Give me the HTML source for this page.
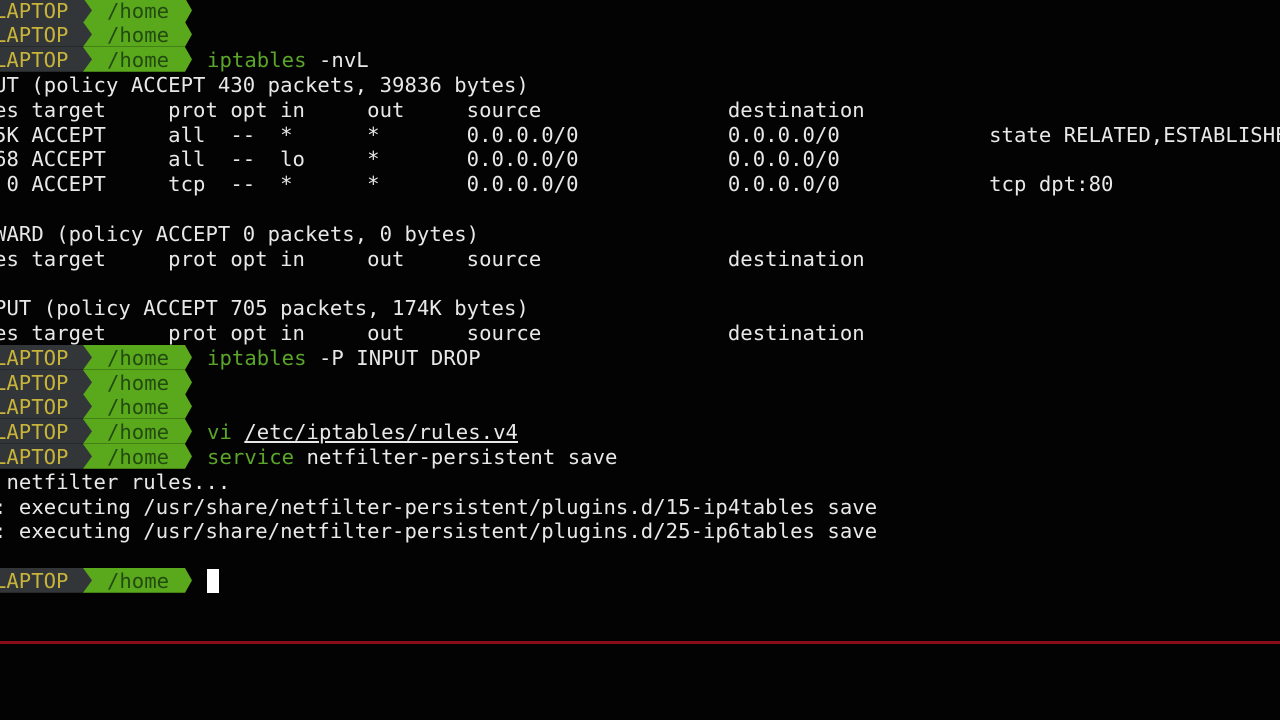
<!DOCTYPE html>
<html><head><meta charset="utf-8"><style>
html,body{margin:0;padding:0;background:#030303;width:1280px;height:720px;overflow:hidden;position:relative}
.l{position:absolute;left:-6px;height:24.8px;line-height:24.8px;font-family:"DejaVu Sans Mono","Liberation Mono",monospace;font-size:20.6px;letter-spacing:0.04px;color:#e8e8e8;white-space:pre;margin:0;padding-top:1px}
.p{position:absolute;left:0;width:1280px;height:24.8px}
.p svg{position:absolute;left:0;top:0}
.u{position:absolute;left:-6px;top:1px;line-height:24.8px;font-family:"DejaVu Sans Mono",monospace;font-size:20.6px;white-space:pre;color:#c8b43a}
.h{position:absolute;left:107px;top:1px;line-height:24.8px;font-family:"DejaVu Sans Mono",monospace;font-size:20.6px;white-space:pre;color:#234a10}
.c{position:absolute;left:207px;top:1px;line-height:24.8px;font-family:"DejaVu Sans Mono",monospace;font-size:20.6px;letter-spacing:0.04px;white-space:pre;color:#e8e8e8}
.g{color:#5aa52a}
.cur{display:inline-block;width:12px;height:24px;background:#fff;vertical-align:top}
</style></head><body>
<div class="p" style="top:-2.4px"><svg width="200" height="25"><polygon points="83,0 185,0 192,12.4 185,24.8 83,24.8" fill="#5aa91c"/><polygon points="0,0 83,0 92,12.4 83,24.8 0,24.8" fill="#333638"/></svg><div class="u">LAPTOP</div><div class="h">/home</div></div>
<div class="p" style="top:22.4px"><svg width="200" height="25"><polygon points="83,0 185,0 192,12.4 185,24.8 83,24.8" fill="#5aa91c"/><polygon points="0,0 83,0 92,12.4 83,24.8 0,24.8" fill="#333638"/></svg><div class="u">LAPTOP</div><div class="h">/home</div></div>
<div class="p" style="top:47.2px"><svg width="200" height="25"><polygon points="83,0 185,0 192,12.4 185,24.8 83,24.8" fill="#5aa91c"/><polygon points="0,0 83,0 92,12.4 83,24.8 0,24.8" fill="#333638"/></svg><div class="u">LAPTOP</div><div class="h">/home</div><div class="c"><span class="g">iptables</span> -nvL</div></div>
<div class="l" style="top:72px">UT (policy ACCEPT 430 packets, 39836 bytes)</div>
<div class="l" style="top:96.8px">es target     prot opt in     out     source               destination</div>
<div class="l" style="top:121.6px">5K ACCEPT     all  --  *      *       0.0.0.0/0            0.0.0.0/0            state RELATED,ESTABLISHED</div>
<div class="l" style="top:146.4px">68 ACCEPT     all  --  lo     *       0.0.0.0/0            0.0.0.0/0</div>
<div class="l" style="top:171.2px"> 0 ACCEPT     tcp  --  *      *       0.0.0.0/0            0.0.0.0/0            tcp dpt:80</div>
<div class="l" style="top:220.8px">WARD (policy ACCEPT 0 packets, 0 bytes)</div>
<div class="l" style="top:245.6px">es target     prot opt in     out     source               destination</div>
<div class="l" style="top:295.2px">PUT (policy ACCEPT 705 packets, 174K bytes)</div>
<div class="l" style="top:320px">es target     prot opt in     out     source               destination</div>
<div class="p" style="top:344.8px"><svg width="200" height="25"><polygon points="83,0 185,0 192,12.4 185,24.8 83,24.8" fill="#5aa91c"/><polygon points="0,0 83,0 92,12.4 83,24.8 0,24.8" fill="#333638"/></svg><div class="u">LAPTOP</div><div class="h">/home</div><div class="c"><span class="g">iptables</span> -P INPUT DROP</div></div>
<div class="p" style="top:369.6px"><svg width="200" height="25"><polygon points="83,0 185,0 192,12.4 185,24.8 83,24.8" fill="#5aa91c"/><polygon points="0,0 83,0 92,12.4 83,24.8 0,24.8" fill="#333638"/></svg><div class="u">LAPTOP</div><div class="h">/home</div></div>
<div class="p" style="top:394.4px"><svg width="200" height="25"><polygon points="83,0 185,0 192,12.4 185,24.8 83,24.8" fill="#5aa91c"/><polygon points="0,0 83,0 92,12.4 83,24.8 0,24.8" fill="#333638"/></svg><div class="u">LAPTOP</div><div class="h">/home</div></div>
<div class="p" style="top:419.2px"><svg width="200" height="25"><polygon points="83,0 185,0 192,12.4 185,24.8 83,24.8" fill="#5aa91c"/><polygon points="0,0 83,0 92,12.4 83,24.8 0,24.8" fill="#333638"/></svg><div class="u">LAPTOP</div><div class="h">/home</div><div class="c"><span class="g">vi</span> <u>/etc/iptables/rules.v4</u></div></div>
<div class="p" style="top:444px"><svg width="200" height="25"><polygon points="83,0 185,0 192,12.4 185,24.8 83,24.8" fill="#5aa91c"/><polygon points="0,0 83,0 92,12.4 83,24.8 0,24.8" fill="#333638"/></svg><div class="u">LAPTOP</div><div class="h">/home</div><div class="c"><span class="g">service</span> netfilter-persistent save</div></div>
<div class="l" style="top:468.8px"> netfilter rules...</div>
<div class="l" style="top:493.6px">: executing /usr/share/netfilter-persistent/plugins.d/15-ip4tables save</div>
<div class="l" style="top:518.4px">: executing /usr/share/netfilter-persistent/plugins.d/25-ip6tables save</div>
<div class="p" style="top:568px"><svg width="200" height="25"><polygon points="83,0 185,0 192,12.4 185,24.8 83,24.8" fill="#5aa91c"/><polygon points="0,0 83,0 92,12.4 83,24.8 0,24.8" fill="#333638"/></svg><div class="u">LAPTOP</div><div class="h">/home</div><div class="c"><span class="cur"></span></div></div>
<div style="position:absolute;left:0;top:641px;width:1280px;height:3px;background:#8a0c16"></div>
</body></html>
